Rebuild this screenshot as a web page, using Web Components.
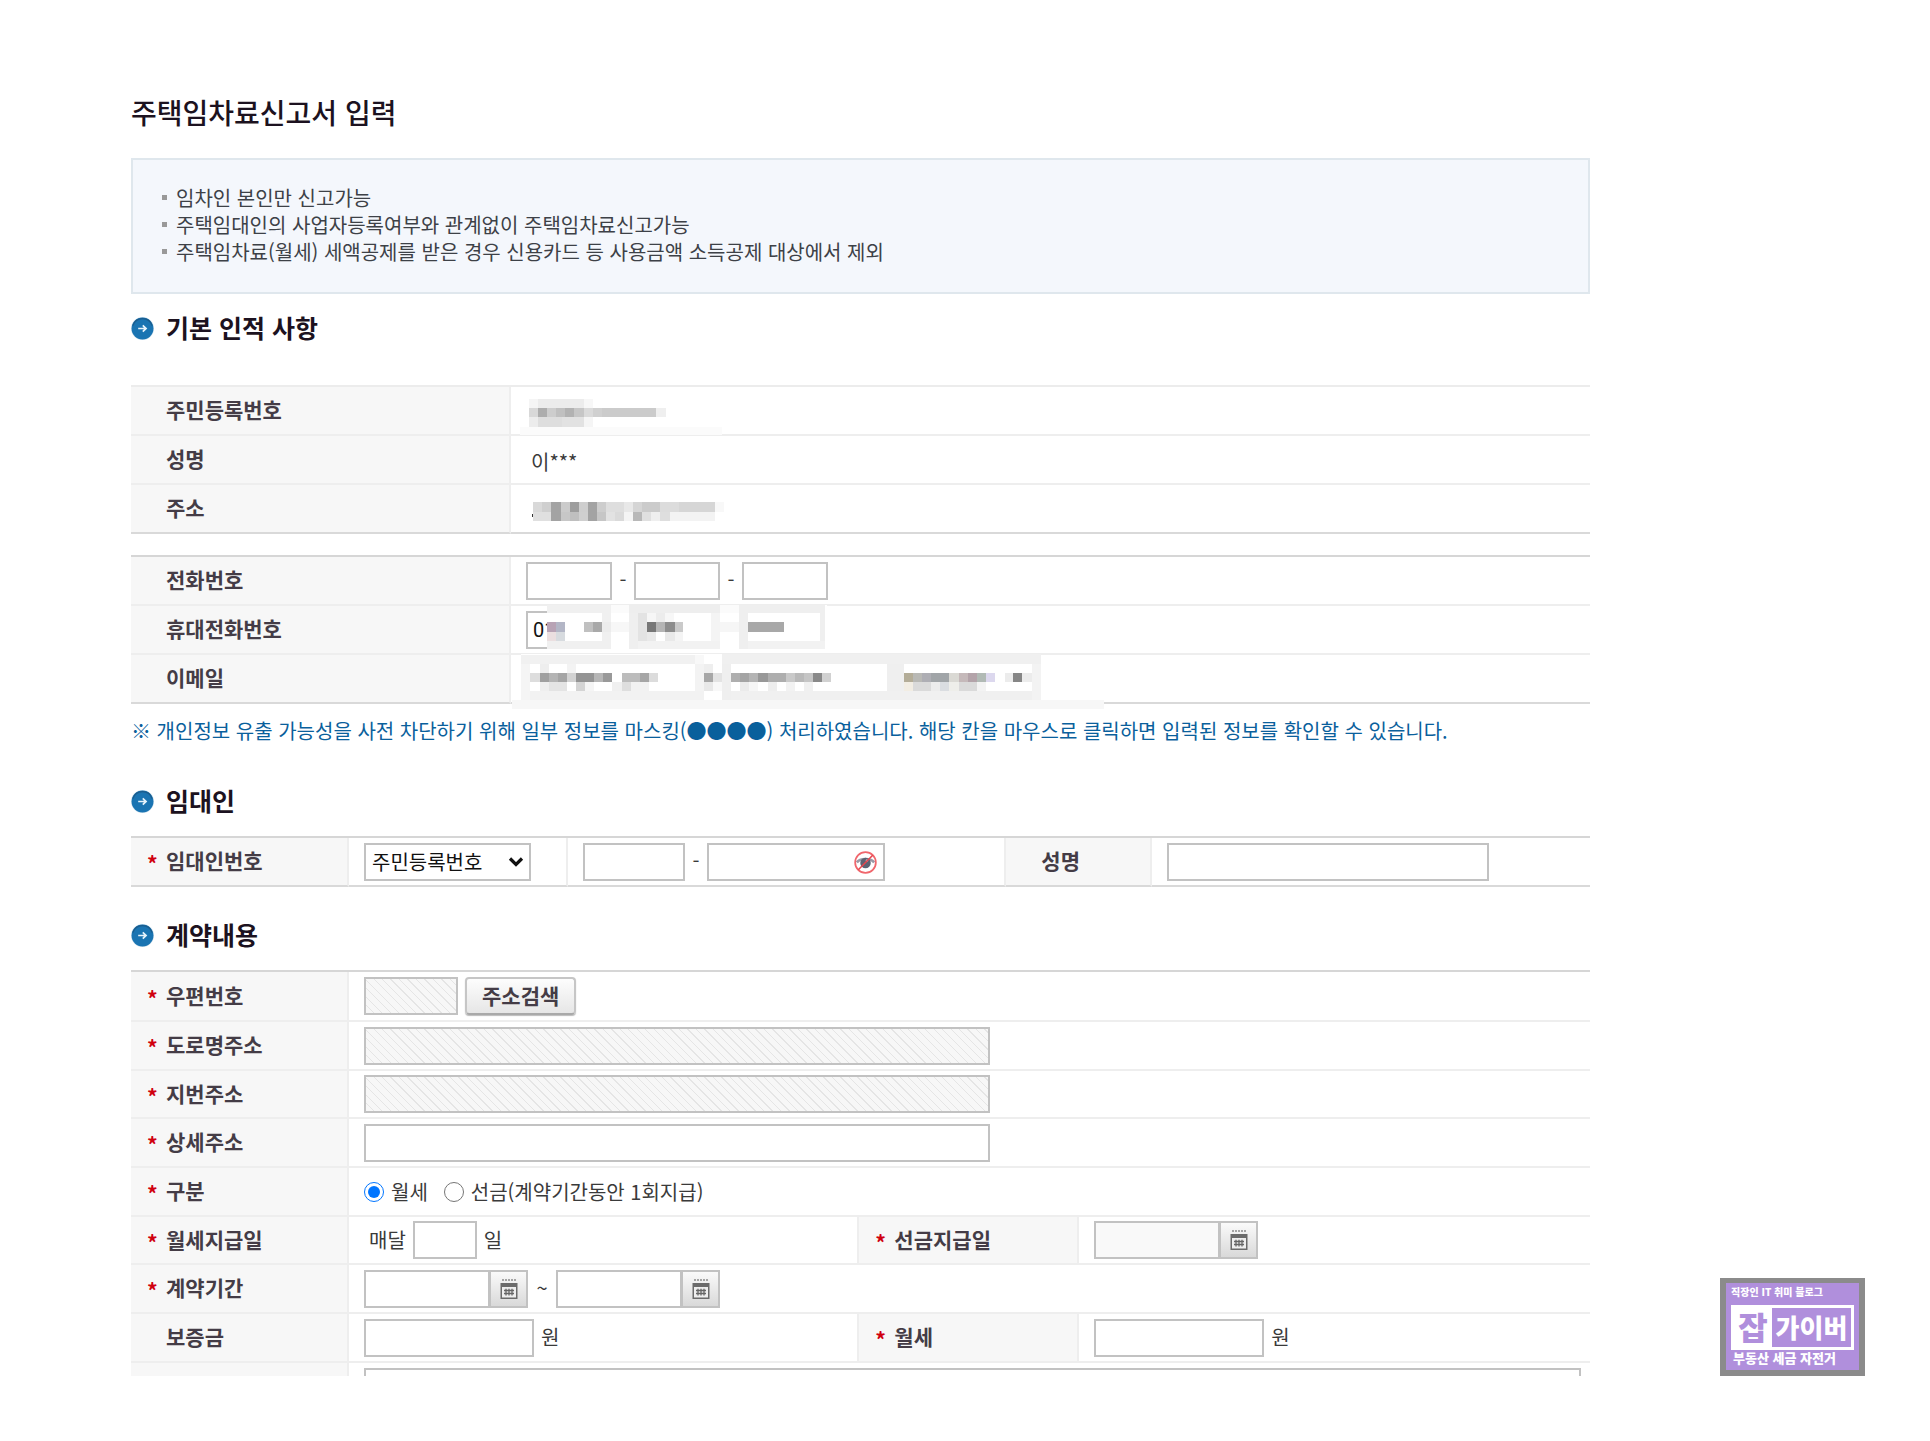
<!DOCTYPE html>
<html lang="ko">
<head>
<meta charset="utf-8">
<title>주택임차료신고서 입력</title>
<style>
html, body { margin: 0; background: #fff; }
body { font-family: "Noto Sans CJK KR", "Noto Sans", sans-serif; font-size: 20px; line-height: 27px; color: #3a3a3a; }
</style>
</head>
<body>
<rent-report-page></rent-report-page>

<script>
const formCss = `
  :host { display: block; }
  * { box-sizing: border-box; }
  table { width: 100%; table-layout: fixed; border-collapse: separate; border-spacing: 0; border-top: 2px solid #d6d6d6; }
  table.soft { border-top-color: #ececec; }
  tr { height: 49px; }
  th, td { padding: 0; border-bottom: 2px solid #eee; vertical-align: middle; text-align: left; }
  th { background: #f7f7f7; border-right: 2px solid #eee; padding: 0 0 2px 35px; font-size: 21px; font-weight: 700; color: #443c46; white-space: nowrap; }
  td { padding-left: 15px; position: relative; }
  .closed tr:last-child > * { border-bottom-color: #d9d9d9; }
  .divided { border-right: 2px solid #eee; }
  .req { padding-left: 16px; }
  .req i { display: inline-block; width: 19px; font-style: normal; color: #d00010; line-height: 20px; vertical-align: -3px; }
  .row { display: flex; align-items: center; }
  .row > span { padding-bottom: 2px; }
  input:not([type=radio]), select { height: 38px; border: 2px solid #c2c2c2; background: #fff; border-radius: 0; margin: 0; padding: 0 5px; font: inherit; color: #111; min-width: 0; }
  input[readonly] { background: repeating-linear-gradient(45deg, #f7f7f7 0 5px, #e5e5e5 5px 6px); }
  input[type=radio] { width: 20px; height: 20px; margin: 0 7px 0 0; accent-color: #0075ff; }
  .dash { width: 22px; text-align: center; }
`;

class BaseElement extends HTMLElement {
  render(html) {
    this.attachShadow({ mode: 'open' }).innerHTML = html;
  }
}

customElements.define('page-title', class extends BaseElement {
  connectedCallback() {
    this.render(`<style>:host{display:block} h1{margin:0;font-size:28px;line-height:40px;font-weight:500;color:#1c1220}</style><h1><slot></slot></h1>`);
  }
});

customElements.define('notice-box', class extends BaseElement {
  connectedCallback() {
    this.render(`<style>
      :host{display:block;border:2px solid #dfe7ed;background:#f4f7fc;padding:24px 29px 27px}
    </style><slot></slot>`);
  }
});

customElements.define('notice-item', class extends BaseElement {
  connectedCallback() {
    this.render(`<style>
      :host{display:flex;align-items:center;gap:9px;color:#3d4147}
      i{width:5px;height:5px;background:#999;flex:none}
    </style><i></i><span><slot></slot></span>`);
  }
});

customElements.define('section-heading', class extends BaseElement {
  connectedCallback() {
    this.render(`<style>
      :host{display:flex;align-items:center;gap:12px}
      svg{width:23px;height:23px;flex:none}
      h2{margin:0;font-size:25px;line-height:30px;padding-bottom:2px;font-weight:700;color:#1c1220}
    </style>
    <svg viewBox="0 0 24 24" aria-hidden="true">
      <circle cx="12" cy="12" r="12" fill="#d6e5ee"/>
      <circle cx="12" cy="12" r="11.4" fill="#1a74b2"/>
      <path d="M2 9a10.5 10.5 0 0 1 20 0" fill="none" stroke="#1b5c8c" stroke-width="1.4"/>
      <path d="M7.500 12h8M12.300 8.800l3.400 3.200-3.400 3.200" fill="none" stroke="#e6f3fb" stroke-width="1.800"/>
    </svg><h2><slot></slot></h2>`);
  }
});

/* Mosaic cells that hide personal data: x, y, width, height, fill */
const mosaics = {
  id: { view: '958 51 588 150', w: 240, h: 50, top: 0, cells: [
    [980,171,495,25,'#fbfbfb'],
    [1002,87,22,27,'#f5f5f5'],[1024,87,112,27,'#ececec'],[1136,87,22,27,'#f7f7f7'],
    [1002,114,22,28,'#d8d8d8'],[1024,114,22,28,'#adadad'],[1046,114,22,28,'#cdcdcd'],[1068,114,22,28,'#c0c0c0'],[1090,114,22,28,'#b2b2b2'],[1112,114,24,28,'#c6c6c6'],
    [1136,114,22,28,'#dadada'],[1158,114,22,28,'#d0d0d0'],[1180,114,134,28,'#cbcbcb'],[1314,114,23,28,'#efefef'],
    [1002,142,22,28,'#ececec'],[1024,142,60,28,'#dedede'],[1084,142,52,28,'#e2e2e2'],[1136,142,22,28,'#f5f5f5'] ] },
  address: { view: '958 345 588 138', w: 240, h: 46, top: 0, cells: [
    [1009,433,4,7,'#333'],
    [1013,397,22,28,'#d9d9d9'],[1035,397,22,28,'#cfcfcf'],[1057,397,23,56,'#a3a3a3'],[1080,397,22,28,'#cbcbcb'],[1102,397,22,28,'#9d9d9d'],[1124,397,23,28,'#cecece'],[1147,397,22,56,'#a3a3a3'],[1169,397,22,28,'#cdcdcd'],[1191,397,45,28,'#dedede'],[1236,397,22,28,'#e8e8e8'],[1258,397,22,28,'#d5d5d5'],[1280,397,44,28,'#cbcbcb'],[1324,397,46,28,'#dcdcdc'],[1370,397,89,28,'#d6d6d6'],[1459,397,22,28,'#f8f8f8'],
    [1013,425,44,28,'#e0e0e0'],[1080,425,22,28,'#c7c7c7'],[1102,425,22,28,'#bfbfbf'],[1124,425,23,28,'#cfcfcf'],[1169,425,22,28,'#c6c6c6'],[1191,425,22,28,'#e2e2e2'],[1213,425,23,28,'#dadada'],[1236,425,22,28,'#f4f4f4'],[1258,425,22,28,'#b8b8b8'],[1280,425,22,28,'#e0e0e0'],[1302,425,22,28,'#efefef'],[1324,425,23,28,'#dedede'],[1347,425,112,28,'#f3f3f3'] ] },
  contact: { view: '27 189 1470 330', w: 600, h: 110, top: -3, cells: [
    [114,195,686,133,'#fff'],
    [114,195,157,25,'#f0f0f0'],[249,220,22,108,'#f0f0f0'],[114,302,157,26,'#f0f0f0'],[271,195,46,25,'#fbfbfb'],
    [114,247,23,28,'#b8a3b5'],[137,247,23,28,'#b3b6c6'],[114,275,23,27,'#ebdfe0'],[137,275,23,27,'#d7dbdf'],
    [205,247,22,28,'#c0c0c0'],[227,247,22,28,'#a9a9a9'],[249,247,22,28,'#ececec'],[271,247,46,28,'#f7f7f7'],
    [317,195,222,25,'#eee'],[317,220,22,108,'#efefef'],[339,302,200,26,'#f2f2f2'],[517,220,22,82,'#f4f4f4'],
    [339,220,22,82,'#e3e3e3'],[361,220,22,27,'#f6f6f6'],[383,220,22,27,'#ececec'],[405,220,22,27,'#f7f7f7'],
    [361,247,22,28,'#777'],[383,247,22,28,'#b5b5b5'],[405,247,23,28,'#8d8d8d'],[428,247,21,28,'#cacaca'],
    [361,275,22,27,'#e9e9e9'],[405,275,23,27,'#e9e9e9'],[428,275,21,27,'#f4f4f4'],
    [539,195,46,25,'#fbfbfb'],[539,247,46,28,'#f6f6f6'],
    [585,195,211,25,'#efefef'],[585,220,22,108,'#efefef'],[607,302,189,26,'#f2f2f2'],[785,220,11,82,'#efefef'],[607,247,89,28,'#a8a8a8'],
    [52,342,1274,138,'#fff'],
    [29,480,1452,28,'#f7f7f7'],
    [52,345,425,27,'#f1f1f1'],[52,372,22,108,'#f5f5f5'],[74,453,425,27,'#f2f2f2'],[477,372,22,81,'#f3f3f3'],[477,345,22,27,'#f8f8f8'],
    [97,372,22,27,'#eee'],[163,372,23,27,'#f3f3f3'],
    [74,398,23,28,'#ddd'],[97,398,22,28,'#a0a0a0'],[119,398,22,28,'#b4b4b4'],[141,398,22,28,'#a5a5a5'],[163,398,23,28,'#d2d2d2'],[186,398,44,28,'#949494'],[230,398,22,28,'#b6b6b6'],[252,398,23,28,'#999'],[298,398,45,28,'#bcbcbc'],[343,398,22,28,'#a6a6a6'],[365,398,22,28,'#dcdcdc'],
    [97,426,22,27,'#efefef'],[119,426,44,27,'#e4e4e4'],[186,426,22,27,'#d4d4d4'],[208,426,22,27,'#f5f5f5'],[275,426,23,27,'#f0f0f0'],[298,426,22,27,'#dedede'],[320,426,45,27,'#f2f2f2'],
    [499,372,22,27,'#eee'],[499,398,22,28,'#a7a7a7'],[521,398,22,28,'#e3e3e3'],[499,426,22,27,'#e8e8e8'],[521,426,22,27,'#f8f8f8'],
    [544,342,781,30,'#f0f0f0'],[544,372,22,108,'#efefef'],[566,453,759,27,'#f0f0f0'],[947,372,43,81,'#efefef'],[1303,372,22,108,'#f3f3f3'],
    [566,398,22,28,'#aeaeae'],[588,398,23,28,'#a4a4a4'],[611,398,22,28,'#b4b4b4'],[633,398,23,28,'#989898'],[656,398,44,28,'#aeaeae'],[700,398,22,28,'#c9c9c9'],[722,398,23,28,'#b9b9b9'],[745,398,22,28,'#c5c5c5'],[767,398,22,28,'#898989'],[789,398,22,28,'#d1d1d1'],
    [588,426,23,27,'#ebebeb'],[611,426,22,27,'#f6f6f6'],[656,426,22,27,'#eee'],[700,426,22,27,'#f2f2f2'],[745,426,22,27,'#f0f0f0'],
    [990,398,23,28,'#b4ad98'],[1013,398,22,28,'#b9b9b5'],[1035,398,22,28,'#aeaeb4'],[1057,398,44,28,'#a1a5a8'],[1101,398,24,28,'#dad9d4'],[1125,398,22,28,'#c5b9ba'],[1147,398,22,28,'#b3a3a9'],[1169,398,22,28,'#b1bab5'],[1191,398,23,28,'#dcd8ee'],
    [990,426,23,27,'#f2ede3'],[1013,426,44,27,'#dadada'],[1057,426,22,27,'#ececec'],[1079,426,22,27,'#dadde1'],[1101,426,24,27,'#eeeeea'],[1125,426,44,27,'#dadada'],[1169,426,22,27,'#f3f3f3'],
    [1237,398,21,28,'#ececec'],[1258,398,22,28,'#868686'],[1280,398,23,28,'#ececec'] ] }
};

customElements.define('pixel-mask', class extends BaseElement {
  connectedCallback() {
    const m = mosaics[this.getAttribute('name')];
    const rects = m.cells.map(([x, y, w, h, f]) => `<rect x="${x}" y="${y}" width="${w}" height="${h}" fill="${f}"/>`).join('');
    this.render(`<style>
      :host{position:absolute;left:0;top:${m.top}px;z-index:1;pointer-events:none}
      svg{display:block;width:${m.w}px;height:${m.h}px}
    </style><svg viewBox="${m.view}" preserveAspectRatio="none" shape-rendering="crispEdges" aria-hidden="true">${rects}</svg>`);
  }
});

customElements.define('date-field', class extends BaseElement {
  connectedCallback() {
    const off = this.hasAttribute('disabled') ? 'disabled' : '';
    this.render(`<style>
      :host{display:flex}
      *{box-sizing:border-box}
      input{width:126px;height:38px;border:2px solid #c2c2c2;border-radius:0;background:#fff;margin:0;padding:0 5px;font:inherit}
      input:disabled{background:#f9f9f9}
      button{width:38px;height:38px;margin:0;padding:0;border:2px solid #c2c2c2;border-left-width:1px;border-radius:0;background:linear-gradient(#fafafa,#d9d9d9);display:flex;align-items:center;justify-content:center}
      svg{width:18px;height:20px}
    </style>
    <input type="text" aria-label="${this.getAttribute('label')}" ${off}>
    <button type="button" aria-label="${this.getAttribute('label')} 달력">
      <svg viewBox="0 0 18 20" aria-hidden="true">
        <path d="M2 1h14" stroke="#8a8a8a" stroke-width="1.600" stroke-dasharray="2 1"/>
        <path d="M0.500 4h17v16h-17z" fill="#6b6b6b"/>
        <path d="M2 8h14v10.500h-14z" fill="#eee"/>
        <path d="M4 11.500h10M4 14.500h10M6 9.800v6.700M9 9.800v6.700M12 9.800v6.700" stroke="#666" stroke-width="1.300"/>
      </svg>
    </button>`);
  }
});

customElements.define('basic-info', class extends BaseElement {
  connectedCallback() {
    this.render(`<style>${formCss}
      col.label { width: 380px; }
      td.text { padding: 4px 0 0 20px; }
      table + table { margin-top: 21px; }
      .row input { width: 86px; }
      #mobile { font-family: Roboto, sans-serif; }
      p { margin: 13px 0 0; color: #0a609c; }
    </style>
    <table class="soft closed"><colgroup><col class="label"><col></colgroup>
      <tr><th scope="row">주민등록번호</th><td><pixel-mask name="id"></pixel-mask></td></tr>
      <tr><th scope="row">성명</th><td class="text">이***</td></tr>
      <tr><th scope="row">주소</th><td><pixel-mask name="address"></pixel-mask></td></tr>
    </table>
    <table class="closed"><colgroup><col class="label"><col></colgroup>
      <tr><th scope="row"><label for="tel">전화번호</label></th>
        <td><div class="row"><input id="tel" type="text"><span class="dash">-</span><input type="text" aria-label="전화번호 가운데"><span class="dash">-</span><input type="text" aria-label="전화번호 끝"></div></td></tr>
      <tr><th scope="row"><label for="mobile">휴대전화번호</label></th>
        <td><div class="row"><input id="mobile" type="text" value="01"></div><pixel-mask name="contact"></pixel-mask></td></tr>
      <tr><th scope="row">이메일</th><td></td></tr>
    </table>
    <p>※ 개인정보 유출 가능성을 사전 차단하기 위해 일부 정보를 마스킹(●●●●) 처리하였습니다. 해당 칸을 마우스로 클릭하면 입력된 정보를 확인할 수 있습니다.</p>`);
  }
});

customElements.define('landlord-form', class extends BaseElement {
  connectedCallback() {
    this.render(`<style>${formCss}
      .pick { position: relative; width: 167px; }
      .pick select { appearance: none; width: 100%; padding: 0 6px; }
      .pick svg { position: absolute; right: 7px; top: 13px; width: 16px; height: 12px; pointer-events: none; }
      .secret { position: relative; }
      .secret svg { position: absolute; right: 8px; top: 8px; width: 23px; height: 23px; }
    </style>
    <table class="closed"><colgroup><col style="width:218px"><col style="width:219px"><col><col style="width:146px"><col style="width:30%"></colgroup>
      <tr>
        <th scope="row" class="req"><label for="no1"><i>*</i>임대인번호</label></th>
        <td class="divided"><div class="pick"><select aria-label="번호 종류"><option>주민등록번호</option></select>
          <svg viewBox="0 0 16 12" aria-hidden="true"><path d="M2 2.500l6 6 6-6" fill="none" stroke="#111" stroke-width="3.200"/></svg></div></td>
        <td class="divided"><div class="row"><input id="no1" type="text" style="width:102px"><span class="dash">-</span>
          <div class="secret"><input type="password" aria-label="임대인번호 뒷자리" style="width:178px">
            <svg viewBox="0 0 24 24" aria-hidden="true">
              <path d="M3 12C6 7 18 7 21 12" fill="none" stroke="#9a9aa6" stroke-width="2.600"/>
              <circle cx="12" cy="12.500" r="5.500" fill="#5d6272"/><circle cx="13.500" cy="10" r="1.300" fill="#b4b9c6"/>
              <circle cx="12" cy="12" r="10.800" fill="none" stroke="#f0666c" stroke-width="1.800"/>
              <path d="M19.500 4.500L4.500 19.500" stroke="#e8444c" stroke-width="1.600"/>
            </svg></div></div></td>
        <th scope="row"><label for="lname">성명</label></th>
        <td><input id="lname" type="text" style="width:322px"></td>
      </tr>
    </table>`);
  }
});

customElements.define('contract-form', class extends BaseElement {
  connectedCallback() {
    const req = '<i>*</i>';
    this.render(`<style>${formCss}
      tr:first-child { height: 50px; }
      tr:nth-child(3n) { height: 48px; }
      .zip { width: 94px; }
      .wide { width: 626px; max-width: 98%; }
      .money { width: 170px; }
      .gap7 { gap: 7px; }
      .split { border-right: 2px solid #eee; }
      button.find { height: 38px; padding: 0 15px 2px; font: inherit; font-size: 21px; font-weight: 700; line-height: 24px; color: #443c46; border: 2px solid #c6c6c6; border-bottom-color: #a9a9a9; border-radius: 4px; background: linear-gradient(#fdfdfd, #e6e6e6); box-shadow: 0 1px 1px #bbb; }
      .radios label { display: flex; align-items: center; margin-right: 16px; }
      .tilde { width: 28px; text-align: center; }
      /* the form is longer than its viewport: only the head of the next row is visible */
      .peek { height: 13px; overflow: hidden; }
      .peek table { border-top: 0; }
      .peek td { padding-right: 9px; }
      .peek input { width: 100%; }
    </style>
    <table><colgroup><col style="width:218px"><col><col style="width:220px"><col style="width:35%"></colgroup>
      <tr><th scope="row" class="req"><label for="zip">${req}우편번호</label></th>
        <td colspan="3"><div class="row gap7"><input id="zip" class="zip" type="text" readonly><button type="button" class="find">주소검색</button></div></td></tr>
      <tr><th scope="row" class="req"><label for="road">${req}도로명주소</label></th><td colspan="3"><div class="row"><input id="road" class="wide" type="text" readonly></div></td></tr>
      <tr><th scope="row" class="req"><label for="lot">${req}지번주소</label></th><td colspan="3"><div class="row"><input id="lot" class="wide" type="text" readonly></div></td></tr>
      <tr><th scope="row" class="req"><label for="detail">${req}상세주소</label></th><td colspan="3"><div class="row"><input id="detail" class="wide" type="text"></div></td></tr>
      <tr><th scope="row" class="req">${req}구분</th>
        <td colspan="3"><div class="row radios"><label><input type="radio" name="kind" checked>월세</label><label><input type="radio" name="kind">선금(계약기간동안 1회지급)</label></div></td></tr>
      <tr><th scope="row" class="req"><label for="payday">${req}월세지급일</label></th>
        <td class="split"><div class="row gap7" style="padding-left:5px"><span>매달</span><input id="payday" type="text" style="width:64px"><span>일</span></div></td>
        <th scope="row" class="req">${req}선금지급일</th>
        <td><date-field label="선금지급일" disabled></date-field></td></tr>
      <tr><th scope="row" class="req">${req}계약기간</th>
        <td colspan="3"><div class="row"><date-field label="계약 시작일"></date-field><span class="tilde">~</span><date-field label="계약 종료일"></date-field></div></td></tr>
      <tr><th scope="row"><label for="deposit">보증금</label></th>
        <td class="split"><div class="row gap7"><input id="deposit" class="money" type="text"><span>원</span></div></td>
        <th scope="row" class="req"><label for="rent">${req}월세</label></th>
        <td><div class="row gap7"><input id="rent" class="money" type="text"><span>원</span></div></td></tr>
    </table>
    <div class="peek"><table><colgroup><col style="width:218px"><col></colgroup>
      <tr><th></th><td><div class="row"><input type="text" aria-label="비고"></div></td></tr></table></div>`);
  }
});

customElements.define('blog-badge', class extends BaseElement {
  connectedCallback() {
    this.render(`<style>
      :host{display:block;box-sizing:border-box;width:145px;height:98px;border:6px solid #8b8b8b;border-top-width:5px;background:#b08fdc;color:#fff;font-weight:900;white-space:nowrap;padding:0 5px}
      .top{font-size:10px;line-height:18px;padding-bottom:4px}
      .mid{display:flex;border:3px solid #fff;background:#fff;height:45px;box-sizing:border-box}
      .a{width:38px;text-align:center;color:#b08fdc;font-size:32px;line-height:37px}
      .b{flex:1;background:#b08fdc;text-align:center;font-size:26px;line-height:38px}
      .end{font-size:13px;line-height:16px;padding-left:2px}
    </style><div class="top">직장인 IT 취미 블로그</div><div class="mid"><span class="a">잡</span><span class="b">가이버</span></div><div class="end">부동산 세금 자전거</div>`);
  }
});

customElements.define('rent-report-page', class extends BaseElement {
  connectedCallback() {
    this.render(`<style>
      :host{display:grid;grid-template-columns:minmax(0,1fr) 275px;align-items:end;padding:92px 65px 65px 131px}
      notice-box{margin-top:26px}
      .h1{margin-top:18px} basic-info{margin-top:41px}
      .h2{margin-top:41px} landlord-form{margin-top:19px}
      .h3{margin-top:32px} contract-form{margin-top:19px}
      blog-badge{justify-self:end}
    </style>
    <main>
      <page-title>주택임차료신고서 입력</page-title>
      <notice-box>
        <notice-item>임차인 본인만 신고가능</notice-item>
        <notice-item>주택임대인의 사업자등록여부와 관계없이 주택임차료신고가능</notice-item>
        <notice-item>주택임차료(월세) 세액공제를 받은 경우 신용카드 등 사용금액 소득공제 대상에서 제외</notice-item>
      </notice-box>
      <section-heading class="h1">기본 인적 사항</section-heading>
      <basic-info></basic-info>
      <section-heading class="h2">임대인</section-heading>
      <landlord-form></landlord-form>
      <section-heading class="h3">계약내용</section-heading>
      <contract-form></contract-form>
    </main>
    <blog-badge></blog-badge>`);
  }
});
</script>
</body>
</html>
